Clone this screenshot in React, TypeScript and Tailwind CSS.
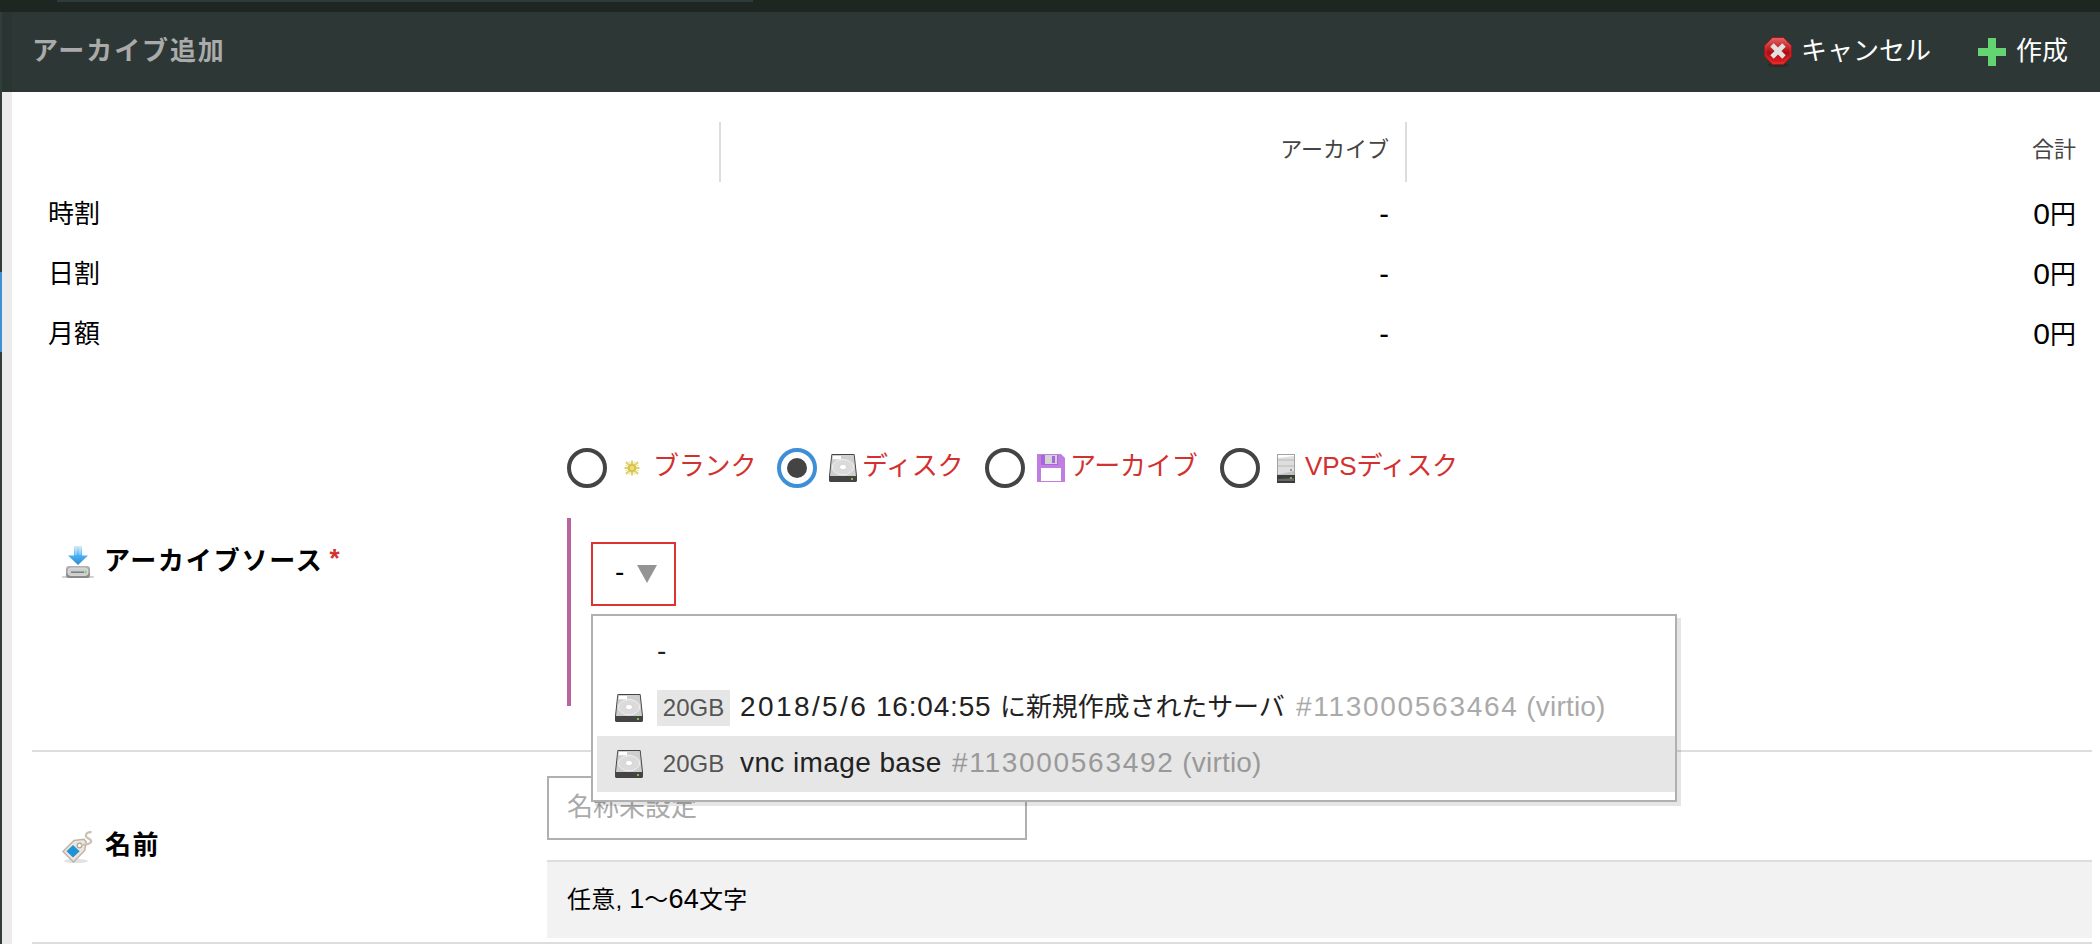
import type { ReactNode } from 'react';

function DiskIcon({ className = '' }: { className?: string }) {
  return (
    <svg className={className} width="28" height="28" viewBox="0 0 28 28" preserveAspectRatio="none">
      <path d="M3 0h22l.7.7L28 22v5l-1 1H1l-1-1v-5L2.300.7z" fill="#444" />
      <path d="M3.200 1h21.600L27 22H1z" fill="#cfcfcf" />
      <ellipse cx="14" cy="13.200" rx="10.700" ry="7.700" fill="#dbdbdb" stroke="#f0f0f0" strokeWidth="1" />
      <path d="M4 2h8v3.200H3.700z" fill="#fff" />
      <ellipse cx="14" cy="13" rx="5.500" ry="3.800" fill="#d9d9d9" />
      <ellipse cx="14" cy="13" rx="3" ry="2.100" fill="#fff" />
      <rect x="22" y="24" width="2" height="2" fill="#7dbb4e" />
    </svg>
  );
}

function SunIcon() {
  return (
    <svg width="28" height="28" viewBox="0 0 28 28">
      <g stroke="#e0cf6a" strokeWidth="2">
        <path d="M14 6.500v15M6.500 14h15M8 8l12 12M20 8L8 20" />
      </g>
      <g stroke="#eee6a8" strokeWidth="1.100">
        <path d="M11.200 7.200l5.600 13.600M7.200 11.200l13.600 5.600M16.800 7.200l-5.600 13.600M20.800 11.200L7.200 16.800" />
      </g>
      <circle cx="14" cy="14" r="4.200" fill="#d9c44e" />
      <circle cx="14" cy="14" r="2" fill="#ece183" />
    </svg>
  );
}

function FloppyIcon() {
  return (
    <svg width="28" height="28" viewBox="0 0 28 28">
      <path d="M0 0h24l4 4v24H0z" fill="#c07fe0" />
      <path d="M4 1h17v10H5l-1-1z" fill="#a866d8" />
      <rect x="8" y="1" width="12" height="9" fill="#d4d4d4" />
      <rect x="15" y="2" width="3" height="7" fill="#a866d8" />
      <rect x="4" y="14" width="20" height="13" fill="#fff" />
    </svg>
  );
}

function ServerIcon() {
  return (
    <svg width="18" height="29" viewBox="0 0 18 29">
      <rect width="18" height="22" fill="#a2a2a2" />
      <rect x="1" y="1" width="16" height="20" fill="#dedede" />
      <path d="M1 1h16v1L1 4z" fill="#fff" />
      <path d="M1 5h16v2H1zM1 11h16v2H1z" fill="#cbcbcb" />
      <path d="M1 20.500L17 17v4H1z" fill="#c2c2c2" />
      <rect x="13" y="15" width="2" height="2" fill="#999" />
      <rect y="21" width="18" height="8" fill="#3b3b3b" />
      <path d="M1 25l16-1v3H1z" fill="#666" />
      <rect x="13" y="23" width="2" height="2" fill="#70b33f" />
    </svg>
  );
}

function CancelIcon() {
  return (
    <svg width="28" height="30" viewBox="0 0 28 30">
      <defs>
        <linearGradient id="cancelFill" x1="0" y1="0" x2="0" y2="1">
          <stop offset="0" stopColor="#e8605f" />
          <stop offset="0.45" stopColor="#b81d22" />
          <stop offset="0.55" stopColor="#a90f15" />
          <stop offset="1" stopColor="#ea1f22" />
        </linearGradient>
      </defs>
      <ellipse cx="14" cy="28" rx="11" ry="2" fill="#1f2725" opacity=".6" />
      <path d="M8.500 0.500h11l8 8v11l-8 8h-11l-8-8v-11z" fill="url(#cancelFill)" stroke="#a01519" />
      <path d="M9.300 2h9.400l7.300 7.300v9.400l-7.300 7.300H9.300L2 18.700V9.300z" fill="none" stroke="#e46a6a" strokeOpacity=".35" />
      <path d="M8 8l12 12M20 8L8 20" stroke="#e4e0e0" strokeWidth="4.800" />
    </svg>
  );
}

function ArchiveSourceIcon() {
  return (
    <svg width="32" height="32" viewBox="0 0 32 32">
      <defs>
        <linearGradient id="arrowFill" x1="0" y1="0" x2="0" y2="1">
          <stop offset="0" stopColor="#d5ebfa" />
          <stop offset="0.5" stopColor="#49b2f4" />
          <stop offset="1" stopColor="#3587cf" />
        </linearGradient>
        <linearGradient id="driveFill" x1="0" y1="0" x2="0" y2="1">
          <stop offset="0" stopColor="#b5b5b5" />
          <stop offset="0.3" stopColor="#a6a6a6" />
          <stop offset="1" stopColor="#858585" />
        </linearGradient>
      </defs>
      <rect x="0" y="30" width="32" height="2" rx="1" fill="#d0d0d0" />
      <rect x="4" y="20" width="24" height="12" rx="3" fill="url(#driveFill)" />
      <rect x="6" y="22" width="20" height="7.500" rx="3" fill="#cfcfcf" stroke="#dedede" strokeWidth=".8" />
      <path d="M9 26.200h13" stroke="#808080" strokeWidth="1.600" />
      <circle cx="23.600" cy="26" r="1.300" fill="#7fdc7a" />
      <path d="M12 0h8v9.500h6L16 19 6 9.500h6z" fill="url(#arrowFill)" />
      <path d="M14 1v8M18 1v8" stroke="#e3f3fd" strokeWidth=".8" strokeOpacity=".8" />
    </svg>
  );
}

function TagIcon() {
  return (
    <svg width="32" height="32" viewBox="0 0 32 32">
      <ellipse cx="14" cy="30" rx="12" ry="2" fill="#e2e2e2" />
      <path d="M1 20.500L12 9.500l10-1.200 2.200 2.500-1.500 8.700L11.500 31z" fill="#eee5dc" stroke="#c0b3a7" strokeWidth="1.500" />
      <path d="M11 14l6.700 6.200L11 26.600l-6.500-6.400z" fill="#1f93d6" />
      <circle cx="17.500" cy="14.500" r="2.300" fill="#fff" stroke="#b0a499" strokeWidth="1.300" />
      <path d="M19 14.200c4.500-.5 9.500-.5 10.200-3.600 .5-2.800-5.700-3.200-5.400-6C24 1.800 27 0.800 29.500 1.400" fill="none" stroke="#cabfb4" strokeWidth="2.200" />
    </svg>
  );
}

function Radio({ checked = false }: { checked?: boolean }) {
  return (
    <span
      className={
        checked
          ? 'flex size-10 shrink-0 items-center justify-center rounded-full border-4 border-[#3f8fd8]'
          : 'flex size-10 shrink-0 items-center justify-center rounded-full border-4 border-[#444]'
      }
    >
      {checked && <span className="size-5 rounded-full bg-[#444]" />}
    </span>
  );
}

function Source({ width, icon, label, checked, iconClass }: { width: string; icon: ReactNode; label: string; checked?: boolean; iconClass: string }) {
  return (
    <label className={`flex items-center ${width}`}>
      <Radio checked={checked} />
      <span className={iconClass}>{icon}</span>
      <span className="-mt-1 whitespace-nowrap tracking-[-0.2px] text-[#d33030]">{label}</span>
    </label>
  );
}

function ResourceId({ id, className }: { id: string; className: string }) {
  return (
    <span className={`-mt-[3px] ${className}`}>
      <span className="tracking-[1.700px]">#{id}</span> <span className="tracking-[0.200px]">(virtio)</span>
    </span>
  );
}

const prices = ['時割', '日割', '月額'];

export default function App() {
  return (
    <div className="flex h-[944px] w-[2100px] flex-col overflow-hidden bg-white font-['Liberation_Sans','Noto_Sans_CJK_JP',sans-serif] text-[26px] leading-[36px] text-black">
      <div className="h-3 shrink-0 bg-[#1e2621] pl-[57px]">
        <div className="h-0.5 w-[696px] bg-[#2f3b3a]" />
      </div>
      <div className="flex min-h-0 flex-1">
        <div className="flex w-0.5 shrink-0 flex-col bg-[#2f3d3b]">
          <div className="mt-[260px] h-20 bg-[#3f8fd8]" />
        </div>
        <div className="flex w-2.5 shrink-0 flex-col bg-[#ebebeb]">
          <div className="h-20 bg-[#2a3430]" />
        </div>
        <main className="flex min-w-0 flex-1 flex-col">
          <header className="flex h-20 shrink-0 items-center bg-[#2d3836] pr-8 pb-[3px] pl-5">
            <h1 className="flex-1 text-[26px] font-bold tracking-[1.900px] text-[#aaa]">アーカイブ追加</h1>
            <button className="flex items-center text-white">
              <span className="mt-0.5 mr-[9px]"><CancelIcon /></span>
              キャンセル
            </button>
            <button className="ml-[47px] flex items-center text-white">
              <svg className="mt-0.5 mr-[10px]" width="28" height="28" viewBox="0 0 28 28">
                <path d="M10 0h8v10h10v8H18v10h-8V18H0v-8h10z" fill="#63d471" />
              </svg>
              作成
            </button>
          </header>

          <div className="flex flex-1 flex-col pr-2 pl-5">
            <table className="mt-[30px] w-full table-fixed border-separate border-spacing-0 text-right">
              <thead>
                <tr className="h-[60px] text-[22px] text-[#444]">
                  <th className="w-[687px]" />
                  <th className="w-[686px] border-l-2 border-[#ddd] pr-4 pb-1 font-normal">アーカイブ</th>
                  <th className="border-l-2 border-[#ddd] pr-4 pb-1 font-normal">合計</th>
                </tr>
              </thead>
              <tbody>
                {prices.map((name) => (
                  <tr key={name} className="h-[60px]">
                    <td className="pt-1 pl-4 text-left">{name}</td>
                    <td className="pt-1 pr-4 text-[29px]">-</td>
                    <td className="pt-1 pr-4"><span className="text-[30px]">0</span>円</td>
                  </tr>
                ))}
              </tbody>
            </table>

            <section className="mt-[10px] flex h-[380px] shrink-0 items-center border-b-2 border-[#ddd]">
              <div className="flex w-[515px] shrink-0 items-center pl-[30px]">
                <span className="mt-0.5"><ArchiveSourceIcon /></span>
                <span className="ml-[10px] font-bold tracking-[1.800px]">アーカイブソース</span>
                <span className="-mt-1.5 ml-[6px] text-[26px] font-bold text-[#d33030]">*</span>
              </div>
              <div className="flex flex-1 flex-col self-stretch pt-[76px] pl-5">
                <div className="flex h-10">
                  <Source width="w-[210px]" icon={<SunIcon />} iconClass="ml-[11px] mr-[7px]" label="ブランク" />
                  <Source width="w-[208px]" icon={<DiskIcon />} iconClass="ml-3 mr-[5px]" label="ディスク" checked />
                  <Source width="w-[235px]" icon={<FloppyIcon />} iconClass="ml-3 mr-[5px]" label="アーカイブ" />
                  <Source width="w-[240px]" icon={<ServerIcon />} iconClass="ml-[17px] mr-[10px]" label="VPSディスク" />
                </div>
                <div className="mt-[30px] h-[188px] border-l-4 border-[#b864a1] pt-6 pl-5">
                  <div className="relative w-[85px]">
                    <button className="flex h-16 w-[85px] items-center border-2 border-[#d33] pl-[22px] text-[28px]">
                      <span className="-mt-1">-</span>
                      <svg className="ml-[13px]" width="20" height="18" viewBox="0 0 20 18">
                        <path d="M0 0h20L10 18z" fill="#949494" />
                      </svg>
                    </button>
                    <div className="absolute top-[72px] left-0 z-10 h-[188px] w-[1086px] border-2 border-[#b0b0b0] bg-white pt-2 pl-1 text-[28px] text-[#222] shadow-[4px_4px_0_rgba(0,0,0,0.1)]">
                      <div className="flex h-14 items-center pb-0.5 pl-[60px]">-</div>
                      <div className="flex h-14 items-center pl-[18px] whitespace-nowrap">
                        <DiskIcon />
                        <span className="ml-[14px] flex h-9 w-[73px] items-center justify-center bg-[#e6e6e6] text-[24px] text-[#555]">20GB</span>
                        <span className="-mt-[3px] ml-[10px] w-[260px]">
                          <span className="tracking-[2.400px]">2018/5/6</span> <span className="tracking-[0.800px]">16:04:55</span>
                        </span>
                        <span className="-mt-[3px] w-[296px] text-[26px] tracking-[-0.1px]">に新規作成されたサーバ</span>
                        <ResourceId id="113000563464" className="text-[#aaa]" />
                      </div>
                      <div className="flex h-14 items-center bg-[#e6e6e6] pl-[18px] whitespace-nowrap">
                        <DiskIcon />
                        <span className="ml-[14px] flex h-9 w-[73px] items-center justify-center text-[24px] text-[#555]">20GB</span>
                        <span className="-mt-[3px] ml-[10px] w-[212px] tracking-[0.400px]">vnc image base</span>
                        <ResourceId id="113000563492" className="text-[#999]" />
                      </div>
                    </div>
                  </div>
                </div>
              </div>
            </section>

            <section className="flex h-[192px] shrink-0 items-center border-b-2 border-[#ddd]">
              <div className="flex w-[515px] shrink-0 items-center pl-[30px]">
                <TagIcon />
                <span className="-mt-1 ml-[11px] font-bold tracking-[1.500px]">名前</span>
              </div>
              <div className="flex flex-1 flex-col self-stretch pt-6">
                <div className="flex h-16 w-[480px] items-center border-2 border-[#b0b0b0] pb-0.5 pl-[18px] text-[#aaa]">名称未設定</div>
                <div className="mt-5 flex h-[78px] items-center border-t-2 border-[#ddd] bg-[#f2f2f2] pb-0.5 pl-5 text-[24px]">
                  <p className="tracking-[0.200px]">任意, <span className="text-[27px]">1</span>～<span className="text-[27px]">64</span>文字</p>
                </div>
              </div>
            </section>
          </div>
        </main>
      </div>
    </div>
  );
}
